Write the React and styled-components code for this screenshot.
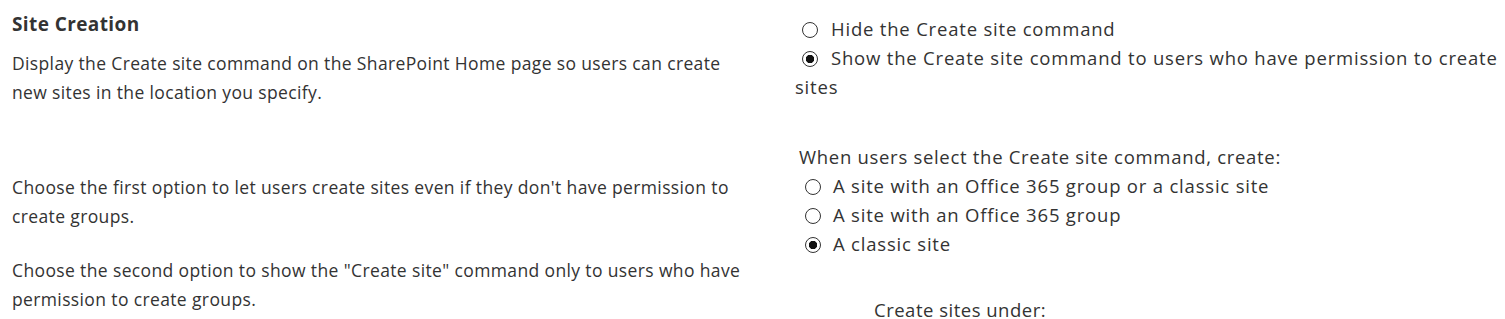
import React from "react";
import styled, { createGlobalStyle } from "styled-components";

const GlobalStyle = createGlobalStyle`
  body {
    margin: 0;
    background: #ffffff;
    font-family: "Open Sans", "Noto Sans", sans-serif;
    color: #333333;
  }
`;

const Page = styled.div`
  display: grid;
  grid-template-columns: 783px 1fr;
  padding: 10px 0 0 12px;
  height: 319px;
  box-sizing: border-box;
  overflow: hidden;
`;

const LeftColumn = styled.div`
  display: flex;
  flex-direction: column;
`;

const Heading = styled.h2`
  margin: 0;
  font-size: 19px;
  font-weight: 700;
  line-height: 29px;
  letter-spacing: 0.4px;
  color: #333333;
`;

const Description = styled.p`
  margin: ${(p) => p.$gap}px 0 0;
  font-size: 17.5px;
  line-height: 29px;
  letter-spacing: ${(p) => p.$tracking}px;
  white-space: nowrap;
`;

const RightColumn = styled.div`
  padding-top: 4px;
  font-size: 18.5px;
  line-height: 29px;
  letter-spacing: 0.8px;
  white-space: nowrap;
`;

const WrapOption = styled.label`
  display: block;
`;

const Radio = styled.span`
  display: inline-block;
  box-sizing: border-box;
  width: 16px;
  height: 16px;
  margin: 0 ${(p) => p.$after}px 0 ${(p) => p.$before}px;
  border: 1.7px solid #333333;
  border-radius: 50%;
  vertical-align: -2px;
  background: ${(p) =>
    p.$checked
      ? "radial-gradient(circle, #111111 0 3.9px, transparent 4.5px)"
      : "transparent"};
`;

const Subheading = styled.div`
  margin: 41px 0 0 4px;
  letter-spacing: 0.7px;
`;

const OptionList = styled.div`
  display: flex;
  flex-direction: column;
`;

const Option = styled.label`
  display: block;
`;

const Footer = styled.div`
  margin: 37px 0 0 79px;
  letter-spacing: 0.5px;
`;

export default function App() {
  return (
    <>
      <GlobalStyle />
      <Page>
        <LeftColumn>
          <Heading>Site Creation</Heading>
          <Description $gap={10} $tracking={0.36}>
            Display the Create site command on the SharePoint Home page so users can create
            <br />
            new sites in the location you specify.
          </Description>
          <Description $gap={66} $tracking={0.37}>
            Choose the first option to let users create sites even if they don't have permission to
            <br />
            create groups.
          </Description>
          <Description $gap={25} $tracking={0.37}>
            Choose the second option to show the "Create site" command only to users who have
            <br />
            permission to create groups.
          </Description>
        </LeftColumn>

        <RightColumn>
          <WrapOption>
            <Radio $before={7} $after={13} />
            Hide the Create site command
          </WrapOption>
          <WrapOption>
            <Radio $checked $before={7} $after={13} />
            Show the Create site command to users who have permission to create
            <br />
            sites
          </WrapOption>

          <Subheading>When users select the Create site command, create:</Subheading>
          <OptionList>
            <Option>
              <Radio $before={10} $after={12} />
              A site with an Office 365 group or a classic site
            </Option>
            <Option>
              <Radio $before={10} $after={12} />
              A site with an Office 365 group
            </Option>
            <Option>
              <Radio $checked $before={10} $after={12} />
              A classic site
            </Option>
          </OptionList>

          <Footer>Create sites under:</Footer>
        </RightColumn>
      </Page>
    </>
  );
}
